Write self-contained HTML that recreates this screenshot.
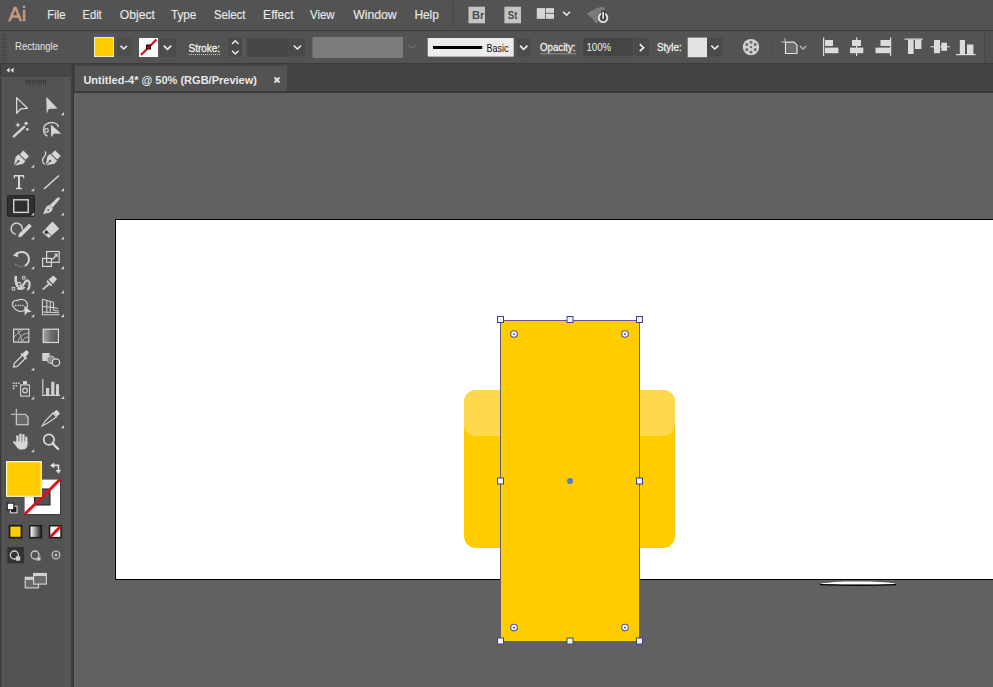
<!DOCTYPE html>
<html><head><meta charset="utf-8">
<style>
html,body{margin:0;padding:0;width:993px;height:687px;overflow:hidden;background:#535353;}
svg{position:absolute;left:0;top:0;display:block}
text{font-family:"Liberation Sans",sans-serif;}
</style></head>
<body>
<svg width="993" height="687" viewBox="0 0 993 687">
<!-- ===== base areas ===== -->
<rect x="0" y="0" width="993" height="687" fill="#535353"/>
<!-- menu bar -->
<rect x="0" y="0" width="993" height="30" fill="#535353"/>
<rect x="0" y="25" width="993" height="1" fill="#4e4e4e"/>
<rect x="0" y="30" width="993" height="1" fill="#3b3b3b"/>
<!-- control bar -->
<rect x="0" y="31" width="993" height="32" fill="#535353"/>
<rect x="0" y="63" width="993" height="1" fill="#3b3b3b"/>
<!-- toolbox -->
<rect x="0" y="64" width="72" height="623" fill="#535353"/>
<rect x="0" y="64" width="72" height="13" fill="#464646"/>
<!-- separator -->
<rect x="71" y="64" width="3" height="623" fill="#3c3c3c"/>
<!-- tab bar -->
<rect x="74" y="64" width="919" height="29" fill="#434343"/><rect x="74" y="65" width="919" height="1" fill="#474747"/><rect x="74" y="90" width="919" height="1" fill="#474747"/>
<rect x="75" y="66" width="212" height="26" fill="#535353"/>
<rect x="74" y="91" width="919" height="2" fill="#393939"/>
<!-- canvas -->
<rect x="74" y="93" width="919" height="594" fill="#616161"/>
<!-- artboard -->
<rect x="115" y="219" width="900" height="361" fill="#000"/>
<rect x="116" y="220" width="900" height="359" fill="#fff"/>



<!-- ===== toolbox ===== -->
<rect x="0" y="64" width="1" height="623" fill="#393939"/>
<rect x="1" y="77" width="1" height="610" fill="#4a4a4a"/>
<rect x="3" y="77" width="1" height="610" fill="#575757"/>
<rect x="6" y="77" width="1" height="610" fill="#4e4e4e"/>
<rect x="65" y="77" width="1" height="610" fill="#595959"/>
<rect x="66" y="77" width="2" height="610" fill="#565656"/>
<rect x="71" y="64" width="2" height="623" fill="#3f3f3f"/>
<rect x="73" y="64" width="1" height="623" fill="#363636"/>
<rect x="74" y="93" width="3" height="594" fill="#646464"/>
<rect x="0" y="76" width="72" height="1" fill="#424242"/><rect x="0" y="77" width="72" height="1" fill="#595959"/>
<path d="M9.6 67.6 L6.4 70.2 L9.6 72.8 Z M13.6 67.6 L10.4 70.2 L13.6 72.8 Z" fill="#e0e0e0"/>
<defs><linearGradient id="gg" x1="0" x2="0" y1="0" y2="1"><stop offset="0" stop-color="#2e2e2e"/><stop offset="1" stop-color="#535353"/></linearGradient></defs><g fill="url(#gg)"><rect x="25.60" y="79.8" width="1.1" height="7.6"/><rect x="27.75" y="79.8" width="1.1" height="7.6"/><rect x="29.90" y="79.8" width="1.1" height="7.6"/><rect x="32.05" y="79.8" width="1.1" height="7.6"/><rect x="34.20" y="79.8" width="1.1" height="7.6"/><rect x="36.35" y="79.8" width="1.1" height="7.6"/><rect x="38.50" y="79.8" width="1.1" height="7.6"/><rect x="40.65" y="79.8" width="1.1" height="7.6"/><rect x="42.80" y="79.8" width="1.1" height="7.6"/><rect x="44.95" y="79.8" width="1.1" height="7.6"/></g>
<g fill="#d6d6d6" stroke="none">
<path d="M34.2 164.6 L34.2 167.8 L31 167.8 Z" fill="#d0d0d0"/><path d="M34.2 188 L34.2 191.2 L31 191.2 Z" fill="#d0d0d0"/><path d="M64 188 L64 191.2 L60.8 191.2 Z" fill="#d0d0d0"/><path d="M34.2 212.4 L34.2 215.6 L31 215.6 Z" fill="#d0d0d0"/><path d="M64 212.4 L64 215.6 L60.8 215.6 Z" fill="#d0d0d0"/><path d="M34.2 236.4 L34.2 239.6 L31 239.6 Z" fill="#d0d0d0"/><path d="M64 236.4 L64 239.6 L60.8 239.6 Z" fill="#d0d0d0"/><path d="M34.2 266 L34.2 269.2 L31 269.2 Z" fill="#d0d0d0"/><path d="M64 266 L64 269.2 L60.8 269.2 Z" fill="#d0d0d0"/><path d="M34.2 290.2 L34.2 293.4 L31 293.4 Z" fill="#d0d0d0"/><path d="M64 290.2 L64 293.4 L60.8 293.4 Z" fill="#d0d0d0"/><path d="M34.2 314 L34.2 317.2 L31 317.2 Z" fill="#d0d0d0"/><path d="M64 314 L64 317.2 L60.8 317.2 Z" fill="#d0d0d0"/><path d="M34.2 367.2 L34.2 370.4 L31 370.4 Z" fill="#d0d0d0"/><path d="M34.2 396.3 L34.2 399.5 L31 399.5 Z" fill="#d0d0d0"/><path d="M64.2 395.8 L64.2 399 L61 399 Z" fill="#d0d0d0"/><path d="M64 425 L64 428.2 L60.8 428.2 Z" fill="#d0d0d0"/><path d="M34.2 449 L34.2 452.2 L31 452.2 Z" fill="#d0d0d0"/><path d="M64 112 L64 115.2 L60.8 115.2 Z" fill="#d0d0d0"/>
</g>
<!-- selection -->
<path d="M16.6 97.6 L27.4 108.3 L20.9 108.8 L16.7 113.2 Z" fill="none" stroke="#d8d8d8" stroke-width="1.3" stroke-linejoin="round"/>
<path d="M46.3 96.8 L57.6 108.4 L48.8 109 L46.6 113.8 Z" fill="#d2d2d2"/>
<!-- magic wand -->
<path d="M13.8 136.4 L24.2 126.8" stroke="#d2d2d2" stroke-width="2.4" stroke-linecap="round"/>
<path d="M17.9 122.2 L18.7 124.2 L20.7 125 L18.7 125.8 L17.9 127.8 L17.1 125.8 L15.1 125 L17.1 124.2 Z" fill="#d8d8d8"/>
<circle cx="26.1" cy="123.3" r="1.6" fill="#d8d8d8"/>
<circle cx="27.3" cy="129.4" r="1.4" fill="#d0d0d0"/>
<!-- lasso -->
<path d="M47.5 136 C42 134 42.5 125.5 47.5 123.5 C52 121.5 57.5 122.5 58.5 127" fill="none" stroke="#cfcfcf" stroke-width="1.4"/>
<circle cx="46.5" cy="130.5" r="1.8" fill="none" stroke="#cfcfcf" stroke-width="1.2"/>
<path d="M50.9 124.4 L61.2 133.8 L54 133.6 L51.2 137.3 Z" fill="#d6d6d6"/>
<!-- pen -->
<g transform="translate(13.8,165.8) rotate(45)">
<path d="M0 0 L-5 -7.5 L-5 -11.5 L5 -11.5 L5 -7.5 Z" fill="#d4d4d4"/>
<rect x="-4" y="-17.5" width="8" height="5" fill="#d8d8d8"/>
<path d="M0 0 V-6" stroke="#555" stroke-width="1"/><circle cx="0" cy="-6.5" r="1.2" fill="#555"/>
</g>
<g transform="translate(45.5,165.5) rotate(45)">
<path d="M0 0 L-5 -7.5 L-5 -11.5 L5 -11.5 L5 -7.5 Z" fill="#d4d4d4"/>
<rect x="-4" y="-17.5" width="8" height="5" fill="#d8d8d8"/>
<path d="M0 0 V-6" stroke="#555" stroke-width="1"/><circle cx="0" cy="-6.5" r="1.2" fill="#555"/>
</g>
<path d="M45 151.5 C46.5 153 45.5 155 44 157 C42 159.5 42 162 44.5 164.5" fill="none" stroke="#d0d0d0" stroke-width="1.3"/>
<!-- type -->
<path d="M13.8 175 H24.2 V178.3 H23 V176.6 H20 V187.8 H22 V189.2 H16 V187.8 H18 V176.6 H15 V178.3 H13.8 Z" fill="#d8d8d8"/>
<!-- line -->
<path d="M44 189 L59 175.5" stroke="#d4d4d4" stroke-width="1.6"/>
<!-- rectangle (selected) -->
<rect x="7.5" y="195.5" width="27" height="20.8" rx="0.8" fill="#2f2f2f" stroke="#262626" stroke-width="1"/>
<rect x="13.7" y="199.8" width="14.5" height="12.6" fill="none" stroke="#d6d6d6" stroke-width="1.4"/>
<path d="M34.2 212.4 L34.2 215.6 L31 215.6 Z" fill="#d0d0d0"/>
<!-- paintbrush -->
<path d="M57.6 197.6 C58.6 196.8 60.2 198.2 59.5 199.2 L52.5 207.8 L49.6 205.2 Z" fill="#d4d4d4"/>
<path d="M49.2 205 L52.8 208.4 C52.2 211.2 49.8 213 46.8 213.2 L43 213.9 L44.6 210.4 C45.4 207.6 46.8 205.6 49.2 205 Z" fill="#d0d0d0"/>
<circle cx="48.2" cy="210" r="0.9" fill="#666"/>
<!-- shaper -->
<path d="M15.7 234.2 A5.6 5.6 0 1 1 22.2 229.7" fill="none" stroke="#d0d0d0" stroke-width="1.5"/>
<path d="M18.4 237.6 L18.8 234 L29.2 223.6 L31.8 226.2 L21.6 236.6 Z" fill="#d6d6d6"/>
<!-- eraser -->
<path d="M52.4 221.4 L59.3 228.7 L48.8 238.1 L42.2 232.3 Z" fill="#d4d4d4"/>
<path d="M45.2 229.6 L51.4 235.6" stroke="#555" stroke-width="0.9"/>
<path d="M44.2 232.2 L46.4 230.2 L48.6 232.4 L46.4 234.4 Z" fill="#333"/>
<!-- rotate -->
<path d="M16 254.5 C19 251 25.5 251 28 255.5 C30 259.5 28.5 264 25 265.8" fill="none" stroke="#d2d2d2" stroke-width="2"/>
<path d="M25 265.8 C21.5 267.5 16.5 266.5 14.5 263" fill="none" stroke="#8a8a8a" stroke-width="1.5" stroke-dasharray="1.5 1.5"/>
<path d="M13 255.5 L17.6 251.5 L18.2 257.2 Z" fill="#d2d2d2"/>
<!-- scale -->
<rect x="46.6" y="251.5" width="12.6" height="10.8" fill="none" stroke="#d6d6d6" stroke-width="1.2"/>
<rect x="42.6" y="258.4" width="8.8" height="8" fill="none" stroke="#d6d6d6" stroke-width="1.2"/>
<path d="M52.5 259.5 L56.5 255" stroke="#d6d6d6" stroke-width="1.3"/><path d="M57.6 253.6 L57.4 257.4 L54 254 Z" fill="#d6d6d6"/>
<!-- puppet warp -->
<path d="M15.8 277 C15.2 280 16 283 17.2 285.8" fill="none" stroke="#d0d0d0" stroke-width="2.6" stroke-linecap="round"/>
<path d="M18.5 288.6 C22 288.4 23.2 284.5 25.2 281.8 C27.2 279.2 29.6 281 29.6 284 C29.6 286.2 29.2 288 28 289.2" fill="none" stroke="#d0d0d0" stroke-width="2.3" stroke-linecap="round"/>
<path d="M17.5 287.5 C19 289.5 23 289.5 24.5 287" fill="none" stroke="#d0d0d0" stroke-width="2"/>
<circle cx="18.9" cy="284.2" r="1.9" fill="none" stroke="#d0d0d0" stroke-width="1.2"/>
<circle cx="23.8" cy="277.8" r="1.5" fill="none" stroke="#d0d0d0" stroke-width="1.1"/>
<rect x="12.2" y="287.4" width="2.6" height="2.6" fill="none" stroke="#d0d0d0" stroke-width="0.9"/>
<!-- pin -->
<path d="M48.5 279.5 L53.5 275.5 L57 279 L53 284 Z" fill="#d4d4d4"/>
<path d="M47.5 280 L52.5 285.2 L50.5 286 L46.5 282 Z" fill="#d4d4d4"/>
<path d="M49 284 L42.8 289.5" stroke="#c8c8c8" stroke-width="1.8"/>
<!-- shape builder -->
<path d="M13.5 307 C11 303.5 13.5 299.5 17.5 300.5 C20 298.5 24.5 299 26.5 302 C28.5 304.5 27.5 309 24 310.5 C21 312.5 16 311.5 13.5 307 Z" fill="none" stroke="#cfcfcf" stroke-width="1.3"/>
<g fill="#e0e0e0"><rect x="15" y="304.8" width="1.3" height="1.3"/><rect x="17.4" y="304.8" width="1.3" height="1.3"/><rect x="19.8" y="304.8" width="1.3" height="1.3"/><rect x="22.2" y="304.8" width="1.3" height="1.3"/></g>
<path d="M24.2 305.8 L31.6 312 L27.5 312.3 L24.8 315.4 Z" fill="#d6d6d6"/>
<!-- perspective grid -->
<g fill="none" stroke="#d2d2d2" stroke-width="1.1">
<path d="M42.4 299 V314.8 H59.6"/>
<path d="M42.4 299.3 L53.5 302.3 M42.4 306.5 L53.5 307.5 M46.8 300.4 V313.5 M50.2 301.4 V311.8 M42.4 312 L59 312.8"/>
<path d="M53.5 302.3 V310 M53.5 307.5 L58 308.5 M53.5 310.5 L59 311"/>
</g>
<!-- mesh -->
<rect x="13.6" y="329.2" width="15.2" height="12.9" fill="none" stroke="#d8d8d8" stroke-width="1.2"/>
<path d="M14 337 C18 333 20 331 23 329.5 M18 342 C19 337 22 334 28.5 333 M22.5 342 C23 339 25 337 28.5 337 M17.5 329.5 C19 333 21 336 22 342" fill="none" stroke="#b8b8b8" stroke-width="1"/>
<!-- gradient -->
<defs><linearGradient id="gr" x1="0" x2="1" y1="0" y2="0"><stop offset="0" stop-color="#a8a8a8"/><stop offset="0.55" stop-color="#6a6a6a"/><stop offset="1" stop-color="#585858"/></linearGradient>
<linearGradient id="gr2" x1="0" x2="1" y1="0" y2="0"><stop offset="0" stop-color="#ffffff"/><stop offset="1" stop-color="#2a2a2a"/></linearGradient></defs>
<rect x="43.2" y="329.2" width="15.2" height="13.3" fill="url(#gr)" stroke="#d8d8d8" stroke-width="1.2"/>
<!-- eyedropper -->
<path d="M13.5 367 L14.2 363.5 L23 354.7 L26 357.7 L17.2 366.5 Z" fill="none" stroke="#d4d4d4" stroke-width="1.3"/>
<path d="M22 354 L25.5 350.8 C27 349.5 29.5 351.5 28.5 353.5 L25.5 357 Z" fill="#d8d8d8"/>
<path d="M21 353.5 L26.5 359" stroke="#d8d8d8" stroke-width="1.5"/>
<!-- blend -->
<rect x="42.2" y="353" width="7.5" height="8" fill="#d0d0d0"/>
<circle cx="51" cy="359.8" r="3.8" fill="#8a8a8a" stroke="#bdbdbd" stroke-width="1"/>
<circle cx="56" cy="362.5" r="3.7" fill="#535353" stroke="#d6d6d6" stroke-width="1.3"/>
<!-- symbol sprayer -->
<g fill="#cfcfcf">
<rect x="12.8" y="382.4" width="1.6" height="1.6"/><rect x="15.4" y="382.4" width="1.6" height="1.6"/><rect x="18" y="382.4" width="1.6" height="1.6"/>
<rect x="12.8" y="385" width="1.6" height="1.6"/><rect x="15.4" y="385" width="1.6" height="1.6"/>
<rect x="12.8" y="387.6" width="1.6" height="1.6"/>
</g>
<rect x="20.6" y="384.9" width="8.8" height="11.2" fill="none" stroke="#d4d4d4" stroke-width="1.1"/>
<rect x="23" y="381" width="4" height="3.3" fill="#d4d4d4"/>
<circle cx="25" cy="390.5" r="2.3" fill="none" stroke="#d0d0d0" stroke-width="1.2"/>
<!-- graph -->
<path d="M42.8 379 V395.4 H60" fill="none" stroke="#d4d4d4" stroke-width="1.1"/>
<g fill="#d0d0d0"><rect x="46" y="388" width="3.2" height="7"/><rect x="51.2" y="381.8" width="3.2" height="13.2"/><rect x="56" y="384.2" width="3" height="10.8"/></g>
<!-- artboard -->
<path d="M16.3 414.2 H25.2 L28.1 417.1 V424.8 H16.3 Z" fill="#6a6a6a" stroke="#d8d8d8" stroke-width="1.1"/>
<path d="M16.3 408.8 V413.5 M11 414.2 H15.6" stroke="#d0d0d0" stroke-width="1.1"/>
<!-- slice/knife -->
<path d="M53.5 412.5 L56.5 409.8 L60 413.5 L57 416.5 Z" fill="#d6d6d6"/>
<path d="M53 413 L56.5 417 L47.5 423 L42.2 426 L44.8 421.5 Z" fill="none" stroke="#d2d2d2" stroke-width="1.2"/>
<!-- hand -->
<g stroke="#d6d6d6" stroke-width="2.3" stroke-linecap="round">
<path d="M17.4 436.4 V443"/><path d="M20.4 434.6 V443"/><path d="M23.4 435.2 V443"/><path d="M26.3 437.6 V444"/>
</g>
<path d="M16.2 441.5 H27.45 V445 C27.45 447.8 25.6 449.6 22.6 449.6 H20.6 C18.8 449.6 17.8 448.4 16.8 447 L13.3 442.8 C12.7 441.8 13.8 440.6 14.9 441.3 L16.2 442.5 Z" fill="#d6d6d6"/>
<!-- zoom -->
<circle cx="48.9" cy="439.6" r="5.2" fill="none" stroke="#d8d8d8" stroke-width="1.7"/>
<path d="M52.6 443.3 L58.2 449" stroke="#d8d8d8" stroke-width="2.4" stroke-linecap="round"/>


<!-- fill / stroke -->
<path d="M53.5 465.4 H58.5 V470.5" fill="none" stroke="#dcdcdc" stroke-width="1.6"/>
<path d="M50 465.4 L54.2 462.6 L54.2 468.2 Z" fill="#e0e0e0"/>
<path d="M55.6 470 L61.2 470 L58.4 473.8 Z" fill="#e0e0e0"/>
<!-- stroke swatch -->
<rect x="24" y="479" width="36.5" height="35.5" fill="#2a2a2a"/>
<rect x="24.5" y="479.5" width="35.5" height="34.5" fill="#ffffff"/>
<rect x="34.6" y="489" width="15.4" height="16" fill="#535353" stroke="#1a1a1a" stroke-width="1"/>
<path d="M25 514 L60 479.5" stroke="#dd1122" stroke-width="3"/>
<!-- fill swatch -->
<rect x="5.8" y="460.8" width="36.3" height="36.3" fill="#2a2a2a"/>
<rect x="6.6" y="461.6" width="34.7" height="34.7" fill="#ffcc00" stroke="#fff6cc" stroke-width="1.2"/>
<!-- default fill stroke -->
<rect x="10.5" y="506.3" width="6.5" height="6.5" fill="#1e1e1e" stroke="#e0e0e0" stroke-width="1"/>
<rect x="7.3" y="503.2" width="6.5" height="6.5" fill="#ffffff" stroke="#1e1e1e" stroke-width="1"/>
<!-- color/gradient/none -->
<rect x="8.7" y="524.9" width="13.6" height="13.6" fill="#1e1a10"/>
<rect x="10.4" y="526.6" width="10.2" height="10.2" fill="#ffcc00"/>
<rect x="29" y="525" width="13.2" height="13.4" fill="#1a1a1a"/>
<rect x="30.5" y="526.5" width="10.2" height="10.4" fill="url(#gr2)"/>
<rect x="48.8" y="525" width="13" height="13.4" fill="#1a1a1a"/>
<rect x="50.3" y="526.5" width="10" height="10.4" fill="#ffffff"/>
<path d="M50.3 537 L60.5 526.5" stroke="#e0101e" stroke-width="3"/>
<!-- draw modes -->
<rect x="7.4" y="547" width="16.7" height="16.2" fill="#323232"/>
<circle cx="14.3" cy="555" r="4" fill="none" stroke="#d0d0d0" stroke-width="1.3"/>
<rect x="15.8" y="556.3" width="4.4" height="4.4" fill="#d0d0d0"/>
<circle cx="35" cy="555" r="4" fill="none" stroke="#c8c8c8" stroke-width="1.3"/>
<path d="M35.5 560.5 L40.5 556.3 V560.5 Z" fill="#c8c8c8"/>
<circle cx="56" cy="555" r="3.8" fill="none" stroke="#bcbcbc" stroke-width="1.3"/>
<circle cx="56" cy="555" r="1.5" fill="#bcbcbc"/>
<!-- screen mode -->
<rect x="25.2" y="577.3" width="13.3" height="10.6" fill="#6a6a6a" stroke="#d6d6d6" stroke-width="1.1"/>
<rect x="25.2" y="577.3" width="13.3" height="2.6" fill="#d0d0d0"/>
<rect x="33.6" y="573.4" width="12.8" height="10.7" fill="#6c6c6c" stroke="#d6d6d6" stroke-width="1.1"/>
<rect x="33.6" y="573.4" width="12.8" height="2.6" fill="#d0d0d0"/>
<!-- ===== control bar ===== -->
<g>
<!-- grip -->
<g fill="#464646">
<rect x="1" y="33" width="6" height="1"/><rect x="1" y="35" width="6" height="1"/><rect x="1" y="37" width="6" height="1"/><rect x="1" y="39" width="6" height="1"/><rect x="1" y="41" width="6" height="1"/><rect x="1" y="43" width="6" height="1"/><rect x="1" y="45" width="6" height="1"/><rect x="1" y="47" width="6" height="1"/><rect x="1" y="49" width="6" height="1"/><rect x="1" y="51" width="6" height="1"/><rect x="1" y="53" width="6" height="1"/><rect x="1" y="55" width="6" height="1"/><rect x="1" y="57" width="6" height="1"/><rect x="1" y="59" width="6" height="1"/><rect x="1" y="61" width="6" height="1"/>
</g>
<text x="15" y="50" font-size="10" fill="#e0e0e0" textLength="43" lengthAdjust="spacingAndGlyphs">Rectangle</text>
<!-- fill swatch -->
<rect x="94" y="34" width="20" height="3.5" fill="#56546a"/>
<rect x="94.5" y="37.5" width="19" height="19" fill="#ffcc00" stroke="#f3ead0" stroke-width="1"/>
<rect x="118" y="38" width="14" height="18" fill="#4d4d4d"/>
<path d="M120.5 45.8 L123.8 49 L127 45.8" fill="none" stroke="#f0f0f0" stroke-width="1.6"/>
<!-- stroke swatch -->
<rect x="139" y="38" width="19" height="19" fill="#fbfbfb"/>
<path d="M141 55 L156.5 39.5" stroke="#d0101a" stroke-width="2.2"/>
<rect x="146.5" y="45" width="4" height="4" fill="#b0000a" stroke="#2a0000" stroke-width="1"/>
<rect x="160.5" y="39" width="15" height="17" fill="#4d4d4d" stroke="#484848" stroke-width="1"/>
<path d="M163.8 45.6 L167.5 49.3 L171.2 45.6" fill="none" stroke="#f0f0f0" stroke-width="1.6"/>
<!-- Stroke: -->
<text x="188.5" y="51.5" font-size="10" fill="#f0f0f0" stroke="#f0f0f0" stroke-width="0.3" textLength="31.5" lengthAdjust="spacingAndGlyphs">Stroke:</text>
<path d="M189 54.5 H220.5" stroke="#cfcfcf" stroke-width="1" stroke-dasharray="1 1"/>
<!-- spinner -->
<rect x="228.5" y="38" width="13.5" height="18.5" fill="#494949"/>
<path d="M232 44 L235.3 40.8 L238.6 44" fill="none" stroke="#eeeeee" stroke-width="1.4"/>
<path d="M232 50.8 L235.3 54 L238.6 50.8" fill="none" stroke="#eeeeee" stroke-width="1.4"/>
<rect x="243.5" y="38" width="1" height="18.5" fill="#5e5e5e"/>
<rect x="247" y="38.4" width="41.5" height="18" fill="#454545"/>
<rect x="288.5" y="38.4" width="16.5" height="18" fill="#4a4a4a"/>
<path d="M293.8 45.5 L297.4 49 L301 45.5" fill="none" stroke="#f0f0f0" stroke-width="1.6"/>
<!-- variable width profile -->
<rect x="312.5" y="37" width="90.5" height="21" fill="#7d7d7d"/>
<rect x="313.5" y="38" width="88.5" height="19" fill="#7b7b7b"/>
<path d="M408.8 45.6 L412 48.2 L415.4 45.6" fill="none" stroke="#6b6b6b" stroke-width="1.4"/>
<!-- brush -->
<rect x="427.7" y="38" width="86" height="18.6" fill="#ececec"/>
<rect x="433" y="46" width="49.2" height="3" fill="#000"/>
<text x="486.5" y="51.6" font-size="10" fill="#111" textLength="22" lengthAdjust="spacingAndGlyphs">Basic</text>
<rect x="517" y="38.5" width="14" height="18" fill="#4b4b4b"/>
<path d="M520 45.6 L523.7 49.3 L527.4 45.6" fill="none" stroke="#f0f0f0" stroke-width="1.6"/>
<!-- opacity -->
<text x="540" y="50.8" font-size="10" fill="#f0f0f0" stroke="#f0f0f0" stroke-width="0.3" textLength="35.5" lengthAdjust="spacingAndGlyphs">Opacity:</text>
<path d="M540.5 53.8 H576" stroke="#cfcfcf" stroke-width="1" stroke-dasharray="1 1"/>
<rect x="583.3" y="38" width="49.6" height="18.2" fill="#454545"/>
<text x="586.4" y="51" font-size="10" fill="#f0f0f0" textLength="24.7" lengthAdjust="spacingAndGlyphs">100%</text>
<rect x="634" y="38" width="15" height="18.2" fill="#4a4a4a"/>
<path d="M639.8 44.2 L643.6 47.7 L639.8 51.2" fill="none" stroke="#f0f0f0" stroke-width="1.6"/>
<!-- style -->
<text x="657" y="51" font-size="10" fill="#f0f0f0" stroke="#f0f0f0" stroke-width="0.3" textLength="24.7" lengthAdjust="spacingAndGlyphs">Style:</text>
<rect x="687.7" y="37.6" width="19.3" height="19.6" fill="#e3e3e3"/>
<rect x="707" y="38" width="15.5" height="18.5" fill="#4a4a4a"/>
<path d="M711.3 45.6 L714.8 49 L718.3 45.6" fill="none" stroke="#f0f0f0" stroke-width="1.6"/>

<!-- globe (recolor) -->
<circle cx="751" cy="47.1" r="8.2" fill="#d2d2d2"/>
<g fill="#6a6a6a">
<circle cx="751" cy="42.2" r="1.5"/><circle cx="755.2" cy="44.6" r="1.5"/><circle cx="755.2" cy="49.6" r="1.5"/>
<circle cx="751" cy="52" r="1.5"/><circle cx="746.8" cy="49.6" r="1.5"/><circle cx="746.8" cy="44.6" r="1.5"/>
<circle cx="751" cy="47.1" r="1.2"/>
</g>
<rect x="771" y="36" width="1" height="22" fill="#4c4c4c"/>
<!-- doc icon -->
<path d="M785.5 42.2 H794 L797 45.2 V53.5 H785.5 Z" fill="#6c6c6c" stroke="#e0e0e0" stroke-width="1.2"/>
<path d="M785 38 V42 M781 42 H785" stroke="#bdbdbd" stroke-width="1"/>
<path d="M800 46 L803 49 L806.2 46" fill="none" stroke="#b8b8b8" stroke-width="1.4"/>
<!-- align icons -->
<g fill="#dcdcdc">
<rect x="823" y="37.5" width="1.2" height="18.5"/>
<rect x="825" y="40" width="8" height="6"/>
<rect x="825" y="47.6" width="13.4" height="5.6"/>
<rect x="856" y="37.5" width="1.2" height="18.5"/>
<rect x="852" y="40" width="9" height="6"/>
<rect x="850" y="47.6" width="13.3" height="5.6"/>
<rect x="890" y="37.5" width="1.2" height="18.5"/>
<rect x="880.5" y="40" width="9.5" height="6"/>
<rect x="875.5" y="47.6" width="14.5" height="5.6"/>
<rect x="904.5" y="38.5" width="18.2" height="1.2"/>
<rect x="908" y="39.5" width="5.6" height="14.5"/>
<rect x="915" y="39.5" width="6.4" height="9.5"/>
<rect x="930.5" y="46.2" width="19.3" height="1.1"/>
<rect x="934" y="40" width="6" height="13.2"/>
<rect x="941.3" y="42.7" width="5.7" height="8.1"/>
<rect x="956" y="54" width="19.6" height="1.2"/>
<rect x="959.8" y="40" width="5.2" height="14"/>
<rect x="967" y="44.5" width="6.4" height="9.5"/>
</g>
<rect x="984" y="31" width="1" height="32" fill="#484848"/>
<rect x="985" y="31" width="8" height="32" fill="#505050"/>
</g>

<!-- menu text -->
<g fill="#e8e8e8" font-size="12" stroke="#e8e8e8" stroke-width="0.15">
<text x="47.3" y="19" textLength="18.2" lengthAdjust="spacingAndGlyphs">File</text>
<text x="82.6" y="19" textLength="19.1" lengthAdjust="spacingAndGlyphs">Edit</text>
<text x="119.8" y="19" textLength="35.2" lengthAdjust="spacingAndGlyphs">Object</text>
<text x="171" y="19" textLength="25.3" lengthAdjust="spacingAndGlyphs">Type</text>
<text x="214" y="19" textLength="31.4" lengthAdjust="spacingAndGlyphs">Select</text>
<text x="263.1" y="19" textLength="30.6" lengthAdjust="spacingAndGlyphs">Effect</text>
<text x="310" y="19" textLength="24.6" lengthAdjust="spacingAndGlyphs">View</text>
<text x="353.2" y="19" textLength="43.5" lengthAdjust="spacingAndGlyphs">Window</text>
<text x="414.4" y="19" textLength="24.5" lengthAdjust="spacingAndGlyphs">Help</text>
</g>

<!-- menu right icons -->
<rect x="452" y="3" width="2" height="22" fill="#4b4b4b"/>
<rect x="468.5" y="6.7" width="16.5" height="16.6" fill="#c4c4c4"/>
<text x="472" y="19" font-size="11" font-weight="bold" fill="#4c4c4c" textLength="12.3" lengthAdjust="spacingAndGlyphs">Br</text>
<rect x="504.4" y="6.7" width="16.6" height="16.6" fill="#c4c4c4"/>
<text x="507.8" y="19" font-size="11" font-weight="bold" fill="#4c4c4c" textLength="9.6" lengthAdjust="spacingAndGlyphs">St</text>
<g fill="#d6d6d6">
<rect x="536.8" y="8.1" width="8.2" height="10.7"/>
<rect x="545.8" y="8.1" width="8.2" height="4.7"/>
<rect x="545.8" y="13.7" width="8.2" height="5.1"/>
</g>
<path d="M563.2 11.8 L566.6 15.2 L570 11.8" fill="none" stroke="#ececec" stroke-width="1.6"/>
<path d="M586.5 14.2 C590 11.5 595 8 602.5 6.8 C604.5 7 605.5 9 604.5 11 L598.5 21.5 C597.5 23.5 595.5 23.8 594.8 22 C593.5 19 591 16.5 586.5 14.2 Z" fill="#7a7a7a"/>
<circle cx="603.1" cy="17.8" r="4.3" fill="#535353" stroke="#e4e4e4" stroke-width="1.8"/>
<rect x="601.2" y="10.5" width="3.8" height="9" fill="#333"/>
<rect x="602.3" y="11.8" width="1.7" height="7" fill="#e4e4e4"/>

<!-- Ai logo -->
<rect x="7" y="3" width="24" height="19" fill="#515255"/><text x="8.2" y="20.5" font-size="21" fill="#cc9c7a" textLength="18" lengthAdjust="spacingAndGlyphs" stroke="#cc9c7a" stroke-width="0.5">Ai</text>

<!-- tab text -->
<text x="83.4" y="84.2" font-size="11.5" font-weight="bold" fill="#e8e8e8" textLength="173.6" lengthAdjust="spacingAndGlyphs">Untitled-4* @ 50% (RGB/Preview)</text>

<path d="M274.5 77.5 L279.5 82.5 M279.5 77.5 L274.5 82.5" stroke="#e8e8e8" stroke-width="1.8"/>
<!-- shapes -->
<rect x="464" y="390" width="211" height="158" rx="12" fill="#ffcc00"/>
<rect x="464" y="390" width="211" height="46" rx="12" fill="#ffd84c"/>
<rect x="500.5" y="320.5" width="139" height="321" fill="#ffcc00" stroke="#5d5d82" stroke-width="1"/>

<!-- selection widgets -->
<g fill="#f4f6ff" stroke="#3c4488" stroke-width="1">
<rect x="497.5" y="316.5" width="6" height="6"/><rect x="567" y="316.5" width="6" height="6"/><rect x="636.5" y="316.5" width="6" height="6"/>
<rect x="497.5" y="478" width="6" height="6"/><rect x="636.5" y="478" width="6" height="6"/>
<rect x="497.5" y="638" width="6" height="6"/><rect x="567" y="638" width="6" height="6"/><rect x="636.5" y="638" width="6" height="6"/>
</g>
<g>
<circle cx="514" cy="334" r="3.3" fill="#ffffff" stroke="#4a55a0" stroke-width="1.1"/><circle cx="514" cy="334" r="1.1" fill="#4a6ad0"/>
<circle cx="625" cy="334" r="3.3" fill="#ffffff" stroke="#4a55a0" stroke-width="1.1"/><circle cx="625" cy="334" r="1.1" fill="#4a6ad0"/>
<circle cx="514" cy="627.6" r="3.3" fill="#ffffff" stroke="#4a55a0" stroke-width="1.1"/><circle cx="514" cy="627.6" r="1.1" fill="#4a6ad0"/>
<circle cx="625" cy="627.6" r="3.3" fill="#ffffff" stroke="#4a55a0" stroke-width="1.1"/><circle cx="625" cy="627.6" r="1.1" fill="#4a6ad0"/>
<circle cx="570" cy="481" r="2.9" fill="#4f78e0"/>
</g>
<!-- artifact -->
<path d="M821 583.4 C835 581.8 845 581 850 581.6 C870 581.4 885 582 895 583.4 L895 584.2 C880 584.8 840 584.8 821 584.2 Z" fill="#ffffff"/>
<path d="M820 584.6 C840 585.2 880 585.2 896 584.6" fill="none" stroke="#000" stroke-width="1.3"/>
</svg>
</body></html>
